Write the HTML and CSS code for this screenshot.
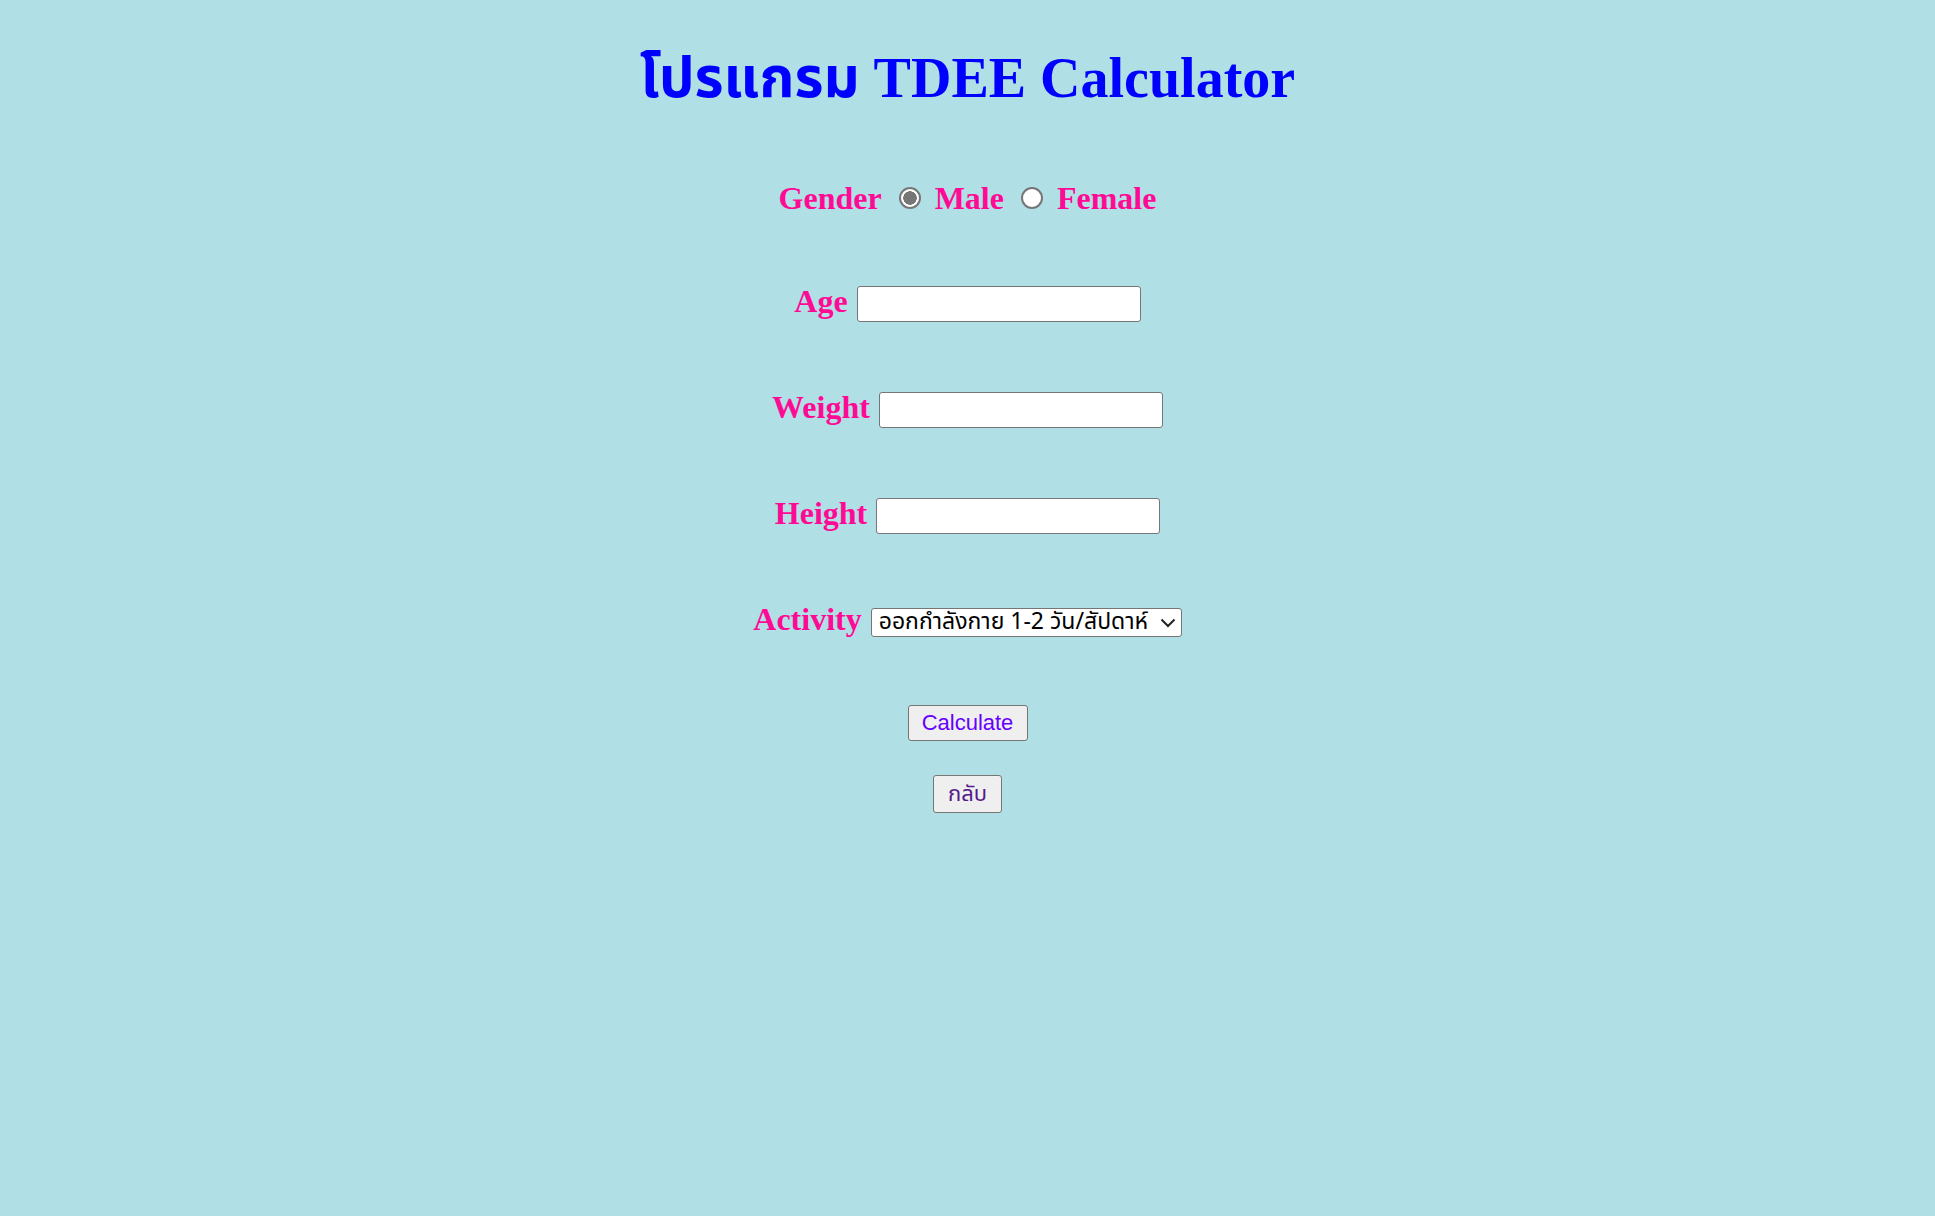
FILE: index.html
```html
<!DOCTYPE html>
<html lang="th">
<head>
<meta charset="utf-8">
<title>TDEE Calculator</title>
<link rel="stylesheet" href="styles.css">
</head>
<body>
<main class="page">
  <h1 class="title">โปรแกรม TDEE Calculator</h1>
  <form class="form">
    <div class="row row-gender">
      <span class="label">Gender</span>
      <input class="radio" type="radio" name="gender" value="male" checked>
      <span class="label">Male</span>
      <input class="radio" type="radio" name="gender" value="female">
      <span class="label">Female</span>
    </div>
    <div class="row">
      <label class="label" for="age">Age</label>
      <input class="field" id="age" type="text">
    </div>
    <div class="row">
      <label class="label" for="weight">Weight</label>
      <input class="field" id="weight" type="text">
    </div>
    <div class="row">
      <label class="label" for="height">Height</label>
      <input class="field" id="height" type="text">
    </div>
    <div class="row">
      <label class="label" for="activity">Activity</label>
      <span class="select-wrap">
        <select class="select" id="activity">
          <option>ออกกำลังกาย 1-2 วัน/สัปดาห์</option>
          <option>ไม่ออกกำลังกาย</option>
          <option>ออกกำลังกาย 3-5 วัน/สัปดาห์</option>
          <option>ออกกำลังกาย 6-7 วัน/สัปดาห์</option>
        </select>
        <svg class="chevron" width="16" height="10" viewBox="0 0 16 10" aria-hidden="true">
          <path d="M1.5 1.5 L8 8 L14.5 1.5" fill="none" stroke="#222" stroke-width="2"/>
        </svg>
      </span>
    </div>
    <div class="buttons">
      <button class="btn btn-calc" type="button">Calculate</button>
      <button class="btn btn-back" type="button">กลับ</button>
    </div>
  </form>
</main>
</body>
</html>
```

FILE: styles.css
```css
html, body {
  margin: 0;
  padding: 0;
}
body {
  background: #B0E0E6;
  min-height: 1216px;
  font-family: "Liberation Serif", "Noto Sans Thai", "Noto Sans", serif;
}
.page {
  display: flex;
  flex-direction: column;
  align-items: center;
  padding-top: 46px;
}
.title {
  margin: 0;
  font-size: 56px;
  line-height: 64px;
  height: 64px;
  font-weight: bold;
  color: #0000FF;
  white-space: nowrap;
}
.form {
  margin-top: 70px;
  display: flex;
  flex-direction: column;
  align-items: center;
  gap: 70px;
}
.row {
  height: 36px;
  display: flex;
  align-items: center;
  justify-content: center;
  gap: 9px;
}
.label {
  font-size: 32px;
  font-weight: bold;
  color: #FF0A94;
  line-height: 36px;
  margin-bottom: 6px;
}
.row-gender .label {
  margin-bottom: 0;
}
.radio {
  appearance: none;
  -webkit-appearance: none;
  width: 22px;
  height: 22px;
  margin: 0 5px 0 8px;
  border: 2px solid #767676;
  border-radius: 50%;
  background: #fff;
  box-sizing: border-box;
  flex: none;
}
.radio:checked {
  background: radial-gradient(circle, #767676 0 6.5px, #fff 7px);
}
.field {
  width: 284px;
  height: 36px;
  box-sizing: border-box;
  border: 1px solid #767676;
  border-radius: 3px;
  background: #fff;
  padding: 0 4px;
  font-size: 20px;
}
.select-wrap {
  position: relative;
  display: block;
  width: 311px;
  height: 29px;
}
.select {
  appearance: none;
  -webkit-appearance: none;
  width: 311px;
  height: 29px;
  box-sizing: border-box;
  border: 1px solid #767676;
  border-radius: 3px;
  background: #fff;
  color: #000;
  font-size: 23px;
  line-height: 27px;
  font-family: "Noto Sans Thai", "Noto Sans", "DejaVu Sans", sans-serif;
  padding: 0 26px 0 7px;
  overflow: hidden;
  white-space: nowrap;
}
.chevron {
  position: absolute;
  right: 6px;
  top: 10px;
  pointer-events: none;
}
.buttons {
  margin-top: -5px;
  display: flex;
  flex-direction: column;
  align-items: center;
  gap: 34px;
}
.btn {
  background: #EFEFEF;
  border: 1px solid #767676;
  border-radius: 3px;
  box-sizing: border-box;
  font-family: "Liberation Sans", "Noto Sans Thai", "Noto Sans", sans-serif;
  font-size: 22px;
  padding: 0;
}
.btn-calc {
  width: 120px;
  height: 36px;
  color: #6600FF;
}
.btn-back {
  width: 69px;
  height: 38px;
  color: #551A8B;
}
```
